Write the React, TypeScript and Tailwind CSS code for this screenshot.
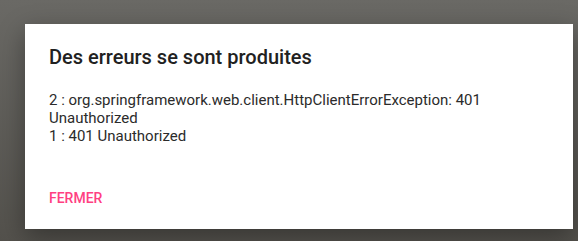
export default function App() {
  return (
    <div
      className="w-[578px] h-[241px] bg-gradient-to-b from-[#6a6965] to-[#53514c] pt-[24px] pl-[25px] overflow-hidden"
      style={{ fontFamily: "Roboto, 'Liberation Sans', sans-serif" }}
    >
      <div className="w-[548px] h-[205px] bg-white shadow-[0_8px_24px_rgba(0,0,0,0.35)] flex flex-col pl-[24px] pr-[24px]">
        <h2 className="mt-[21px] text-[20px] leading-[24px] font-medium text-[#212121]">
          Des erreurs se sont produites
        </h2>
        <div className="mt-[22px] text-[15px] leading-[18.2px] text-[#2b2b2b]">
          <div>2 : org.springframework.web.client.HttpClientErrorException: 401 Unauthorized</div>
          <div>1 : 401 Unauthorized</div>
        </div>
        <div className="mt-auto mb-[23px] flex">
          <button className="text-[14px] leading-[16px] font-medium text-[#ff4081] uppercase">
            Fermer
          </button>
        </div>
      </div>
    </div>
  );
}
